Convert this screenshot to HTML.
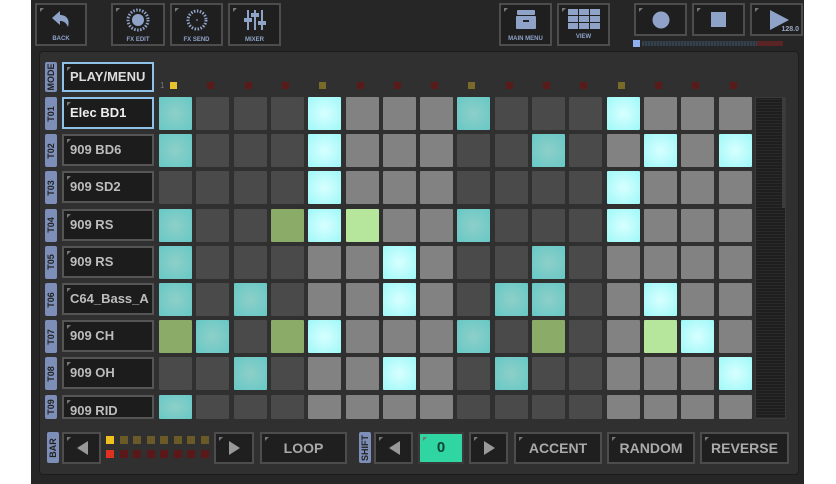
<!DOCTYPE html><html><head><meta charset="utf-8"><style>
*{margin:0;padding:0;box-sizing:border-box}
body{width:836px;height:484px;background:#fff;position:relative;overflow:hidden;font-family:"Liberation Sans",sans-serif}
.app{position:absolute;left:31px;top:0;width:773px;height:484px;background:#262626}
.panel{position:absolute;left:40px;top:52px;width:758px;height:422px;background:#303030;border-radius:3px;box-shadow:0 0 0 1px #1c1c1c}
.a{position:absolute}
.btn{position:absolute;background:#1f1f1f;border:2px solid #4d4d4d;color:#9aa7c2;font-weight:bold;text-align:center}
.btn::before{content:"";position:absolute;left:3px;top:3px;border-top:4px solid #777;border-right:4px solid transparent}
.tb{font-size:6px;color:#8fa3c8}
.name{position:absolute;left:62px;width:92px;height:32px;background:#1c1c1c;border:2px solid #555;color:#bdbdbd;font-weight:bold;font-size:13px;line-height:28px;padding-left:6px;overflow:hidden;white-space:nowrap}
.name::before{content:"";position:absolute;left:3px;top:3px;border-top:4px solid #777;border-right:4px solid transparent}
.tab{position:absolute;left:45px;width:12px;background:#7d8fb8;border-radius:2px;color:#222;font-size:9px;font-weight:bold}
.tab span{position:absolute;left:50%;top:50%;transform:translate(-50%,-50%) rotate(-90deg);white-space:nowrap}
.pad{position:absolute;width:33px;height:33px;border-radius:1px}
.led{position:absolute;width:7px;height:7px}
.big{font-size:14px;color:#aaa;line-height:28px}
</style></head><body>
<div class="app"></div>
<div class="panel"></div>
<div class="btn" style="left:35px;top:3px;width:52px;height:43px"><svg width="24" height="22" viewBox="0 0 24 22" style="margin-top:4px"><path d="M3 9 L11 2 L11 6 C18 6 21 11 19 18 C17 13 14 12 11 12 L11 16 Z" fill="#8fa3c8"/></svg><div class="tb">BACK</div></div>
<div class="btn" style="left:111px;top:3px;width:54px;height:43px"><svg width="26" height="24" viewBox="0 0 26 24" style="margin-top:3px"><circle cx="13" cy="12" r="6" fill="#8fa3c8"/><circle cx="13" cy="12" r="10" fill="none" stroke="#8fa3c8" stroke-width="3" stroke-dasharray="1.5 1.5"/></svg><div class="tb">FX EDIT</div></div>
<div class="btn" style="left:170px;top:3px;width:53px;height:43px"><svg width="26" height="24" viewBox="0 0 26 24" style="margin-top:3px"><circle cx="13" cy="12" r="9" fill="none" stroke="#8fa3c8" stroke-width="3" stroke-dasharray="1.5 1.5"/><line x1="12" y1="12" x2="14" y2="12" stroke="#8fa3c8"/></svg><div class="tb">FX SEND</div></div>
<div class="btn" style="left:228px;top:3px;width:53px;height:43px"><svg width="24" height="24" viewBox="0 0 24 24" style="margin-top:3px"><g stroke="#8fa3c8" stroke-width="2"><line x1="5" y1="2" x2="5" y2="22"/><line x1="12" y1="2" x2="12" y2="22"/><line x1="19" y1="2" x2="19" y2="22"/></g><g fill="#8fa3c8"><rect x="1" y="10" width="8" height="4"/><rect x="8" y="5" width="8" height="4"/><rect x="15" y="13" width="8" height="4"/></g></svg><div class="tb">MIXER</div></div>
<div class="btn" style="left:499px;top:3px;width:53px;height:43px"><svg width="24" height="22" viewBox="0 0 24 22" style="margin-top:4px"><rect x="3" y="1" width="18" height="5" rx="1" fill="#8fa3c8"/><rect x="2" y="7" width="20" height="13" rx="1" fill="#8fa3c8"/><rect x="9" y="11" width="6" height="2" fill="#222"/></svg><div class="tb">MAIN MENU</div></div>
<div class="btn" style="left:557px;top:3px;width:53px;height:43px"><svg width="32" height="20" viewBox="0 0 32 20" style="margin-top:4px"><g fill="#8fa3c8"><rect x="0" y="0" width="10" height="6"/><rect x="11" y="0" width="10" height="6"/><rect x="22" y="0" width="10" height="6"/><rect x="0" y="7" width="10" height="6"/><rect x="11" y="7" width="10" height="6"/><rect x="22" y="7" width="10" height="6"/><rect x="0" y="14" width="10" height="6"/><rect x="11" y="14" width="10" height="6"/><rect x="22" y="14" width="10" height="6"/></g></svg><div class="tb">VIEW</div></div>
<div class="btn" style="left:634px;top:3px;width:53px;height:33px"><svg width="20" height="20" style="margin-top:5px"><circle cx="10" cy="10" r="8.5" fill="#8fa3c8"/></svg></div>
<div class="btn" style="left:692px;top:3px;width:53px;height:33px"><svg width="18" height="18" style="margin-top:6px"><rect x="1" y="1" width="15" height="15" fill="#8fa3c8"/></svg></div>
<div class="btn" style="left:750px;top:3px;width:53px;height:33px"><svg width="24" height="22" style="position:absolute;left:16px;top:4px"><path d="M2 1 L21 11 L2 21 Z" fill="#8fa3c8"/></svg><div style="position:absolute;right:2px;bottom:1px;font-size:7px;color:#9aa7c2">128.0</div></div>
<div class="a" style="left:633px;top:40px;width:7px;height:7px;background:#8fb0f0"></div>
<div class="a" style="left:642px;top:41px;width:115px;height:5px;background:repeating-linear-gradient(90deg,#34404a 0 2px,#2a333b 2px 3px)"></div>
<div class="a" style="left:757px;top:41px;width:26px;height:5px;background:#5a2424"></div>
<div class="tab" style="top:62px;height:30px"><span>MODE</span></div>
<div class="name" style="top:62px;height:30px;border-color:#8ec2e8;color:#ddd;line-height:26px">PLAY/MENU</div>
<div class="a" style="left:160px;top:81px;font-size:8px;color:#777">1</div>
<div id="g"></div>
<div class="a" style="left:755px;top:97px;width:31px;height:322px;background:#1e1e1e;border:1px solid #3a3a3a;background-image:repeating-linear-gradient(0deg,#2a2a2a 0 1px,#1e1e1e 1px 3px)"></div>
<div class="a" style="left:782px;top:98px;width:3px;height:110px;background:#3c3c3c"></div>
<div class="tab" style="left:47px;top:432px;height:31px"><span>BAR</span></div>
<div class="btn" style="left:62px;top:432px;width:39px;height:32px"><svg width="14" height="16" style="margin-top:6px"><path d="M13 1 L2 8 L13 15Z" fill="#999"/></svg></div>
<div class="btn" style="left:214px;top:432px;width:40px;height:32px"><svg width="14" height="16" style="margin-top:6px"><path d="M2 1 L13 8 L2 15Z" fill="#999"/></svg></div>
<div class="btn big" style="left:260px;top:432px;width:87px;height:32px">LOOP</div>
<div class="tab" style="left:359px;top:432px;height:31px"><span>SHIFT</span></div>
<div class="btn" style="left:374px;top:432px;width:39px;height:32px"><svg width="14" height="16" style="margin-top:6px"><path d="M13 1 L2 8 L13 15Z" fill="#999"/></svg></div>
<div class="btn" style="left:418px;top:432px;width:46px;height:32px;background:#2fd6a2;border-color:#3a3a3a;color:#143;font-size:15px;line-height:28px">0</div>
<div class="btn" style="left:469px;top:432px;width:39px;height:32px"><svg width="14" height="16" style="margin-top:6px"><path d="M2 1 L13 8 L2 15Z" fill="#999"/></svg></div>
<div class="btn big" style="left:514px;top:432px;width:88px;height:32px">ACCENT</div>
<div class="btn big" style="left:607px;top:432px;width:88px;height:32px">RANDOM</div>
<div class="btn big" style="left:700px;top:432px;width:89px;height:32px">REVERSE</div>
<script>
var g=document.getElementById('g'),h='';
var C={t:'radial-gradient(#8ecfc8,#66c8c6)',d:'#4a4a4a',l:'#828282',c:'radial-gradient(#d8ffff,#9ef8f8)',g:'#8bac68',G:'#b6e69c'};
var rows=["tdddcllltdddclll","tdddcllleddtdlclc".replace('e',''),"ddddcllldddd"+"clll","tddgcGlltdddclll","tdddllcldd"+"tdllll","tdtdllcldttdlcll","gtdgcllltdgdlGcl","ddtdllcldtddlllc","tdddllllddddllll"];
rows[1]="tdddcllldd"+"tdlclc";
var names=["Elec BD1","909 BD6","909 SD2","909 RS","909 RS","C64_Bass_A","909 CH","909 OH","909 RID"];
for(var r=0;r<9;r++){var y=97+r*37.2;var hh=r==8?24:33;
h+='<div class="tab" style="top:'+y+'px;height:'+hh+'px"><span>T0'+(r+1)+'</span></div>';
h+='<div class="name" style="top:'+y+'px;height:'+(r==8?24:32)+'px;'+(r==0?'border-color:#8ec2e8;color:#eee':'')+'">'+names[r]+'</div>';
for(var c=0;c<16;c++){var x=159+c*37.3;h+='<div class="pad" style="left:'+x+'px;top:'+y+'px;height:'+hh+'px;background:'+C[rows[r][c]]+'"></div>';}}
for(var c=0;c<16;c++){var x=170+c*37.3;var col=c==0?'#e8c030':(c%4==0?'#7a6a2a':'#5a1a1a');h+='<div class="led" style="left:'+x+'px;top:82px;background:'+col+'"></div>';}
for(var i=0;i<8;i++){var x=106+i*13.5;h+='<div class="led" style="left:'+x+'px;top:436px;width:8px;height:8px;background:'+(i==0?'#f0c020':'#6a5a28')+'"></div><div class="led" style="left:'+x+'px;top:450px;width:8px;height:8px;background:'+(i==0?'#e03020':'#5a1818')+'"></div>';}
g.innerHTML=h;
</script>
</body></html>
